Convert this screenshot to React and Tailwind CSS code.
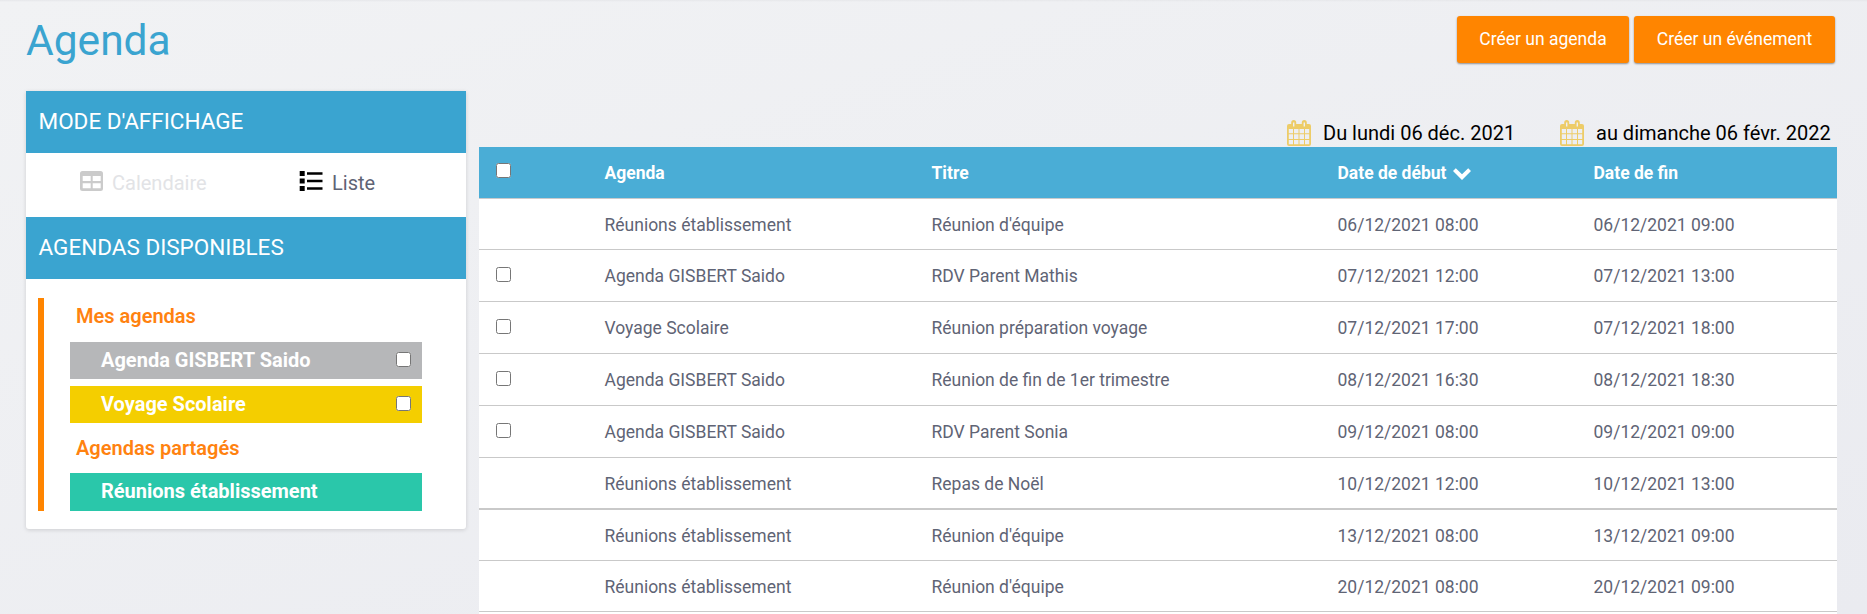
const rows = [
  { agenda: "Réunions établissement", title: "Réunion d'équipe", start: "06/12/2021 08:00", end: "06/12/2021 09:00", size: "h-[51px] border-b" },
  { agenda: "Agenda GISBERT Saido", title: "RDV Parent Mathis", start: "07/12/2021 12:00", end: "07/12/2021 13:00", own: true, size: "h-[52px] border-b" },
  { agenda: "Voyage Scolaire", title: "Réunion préparation voyage", start: "07/12/2021 17:00", end: "07/12/2021 18:00", own: true, size: "h-[52px] border-b" },
  { agenda: "Agenda GISBERT Saido", title: "Réunion de fin de 1er trimestre", start: "08/12/2021 16:30", end: "08/12/2021 18:30", own: true, size: "h-[52px] border-b" },
  { agenda: "Agenda GISBERT Saido", title: "RDV Parent Sonia", start: "09/12/2021 08:00", end: "09/12/2021 09:00", own: true, size: "h-[52px] border-b" },
  { agenda: "Réunions établissement", title: "Repas de Noël", start: "10/12/2021 12:00", end: "10/12/2021 13:00", size: "h-[52px] border-b-2" },
  { agenda: "Réunions établissement", title: "Réunion d'équipe", start: "13/12/2021 08:00", end: "13/12/2021 09:00", size: "h-[51px] border-b" },
  { agenda: "Réunions établissement", title: "Réunion d'équipe", start: "20/12/2021 08:00", end: "20/12/2021 09:00", size: "h-[51px] border-b" },
  { agenda: "", title: "", start: "", end: "", size: "h-[2px]" },
];

const columns = "grid grid-cols-[125.500px_327px_406px_256px_1fr]";

function Checkbox({ className = "" }) {
  return <input type="checkbox" className={"block h-[15px] w-[15px] shrink-0 " + className} />;
}

function TableIcon() {
  return (
    <svg className="h-5 w-[23px]" viewBox="0 0 23 20" fill="#cbcbcb">
      <path fillRule="evenodd" d="M2.500 0h18A2.500 2.500 0 0 1 23 2.500v15a2.500 2.500 0 0 1-2.500 2.500h-18A2.500 2.500 0 0 1 0 17.500v-15A2.500 2.500 0 0 1 2.500 0zM2.700 5v5h8V5zM12.700 5v5h8V5zM2.700 12.300v5h8v-5zM12.700 12.300v5h8v-5z" />
    </svg>
  );
}

function ListIcon() {
  return (
    <svg className="h-5 w-6" viewBox="0 0 24 20" fill="#000">
      <path d="M.7 0h5v5h-5zM.7 7.500h5v5h-5zM.7 15h5v5h-5zM8 1.200h15.500v2.600H8zM8 8.700h15.500v2.600H8zM8 16.200h15.500v2.600H8z" />
    </svg>
  );
}

function CalendarIcon() {
  return (
    <svg className="h-[26px] w-6" viewBox="0 0 24 26" fill="#edcc68">
      <path fillRule="evenodd" d="M2 4h2.200V2.500a2.500 2.500 0 0 1 5 0V4h5.600V2.500a2.500 2.500 0 0 1 5 0V4H22a2 2 0 0 1 2 2v18a2 2 0 0 1-2 2H2a2 2 0 0 1-2-2V6a2 2 0 0 1 2-2zM6 2.400v4.200h1.400V2.400zM16.600 2.400v4.200H18V2.400zM1.800 9v4.300H6V9zM7 9v4.300h4.500V9zM12.500 9v4.300H17V9zM18 9v4.300h4.200V9zM1.800 14.300V19H6v-4.700zM7 14.300V19h4.500v-4.700zM12.500 14.300V19H17v-4.700zM18 14.300V19h4.200v-4.700zM1.800 20v4.200H6V20zM7 20v4.200h4.500V20zM12.500 20v4.200H17V20zM18 20v4.200h4.200V20z" />
    </svg>
  );
}

function Chevron() {
  return (
    <svg className="mt-0.5 ml-[7px] h-3 w-[18px]" viewBox="0 0 18 12" fill="#fff">
      <path d="M2.800 .2L9 6.200L15.200 .2L18 3L9 12L0 3z" />
    </svg>
  );
}

function SectionHeader({ children }) {
  return (
    <h2 className="flex h-[62px] items-center bg-[#3aa4d0] pb-[1px] pl-[12.500px] text-[22.500px] font-normal text-white">
      {children}
    </h2>
  );
}

function Sidebar() {
  return (
    <aside className="w-[440px] shrink-0 self-start rounded-b-[3px] bg-white shadow-[0_1px_4px_rgba(0,0,0,0.14)]">
      <SectionHeader>MODE D'AFFICHAGE</SectionHeader>
      <div className="flex h-16 pt-[18px] text-xl leading-6">
        <div className="flex w-[273px] gap-[9px] pl-[54px] text-[#e2e3e6]">
          <TableIcon />
          Calendaire
        </div>
        <div className="flex gap-[9px] text-[#5f6475]">
          <ListIcon />
          Liste
        </div>
      </div>
      <SectionHeader>AGENDAS DISPONIBLES</SectionHeader>
      <div className="px-3 pt-[19px] pb-[18px]">
        <div className="h-[213px] border-l-[6px] border-[#ff8500] pr-8 pl-[26px] text-xl font-bold text-white">
          <h3 className="h-11 pl-1.5 font-semibold leading-[37px] text-[#ff8210]">Mes agendas</h3>
          <div className="flex h-[37px] justify-between bg-[#b6b7b9] pr-[11px] pl-[31px] leading-9">
            Agenda GISBERT Saido
            <Checkbox className="mt-2.5" />
          </div>
          <div className="mt-[7px] flex h-[37px] justify-between bg-[#f4ce00] pr-[11px] pl-[31px] leading-9">
            Voyage Scolaire
            <Checkbox className="mt-2.5" />
          </div>
          <h3 className="h-[50px] pl-1.5 font-semibold leading-[51px] text-[#ff8210]">Agendas partagés</h3>
          <div className="h-[38px] bg-[#2ac7aa] pl-[31px] leading-9">Réunions établissement</div>
        </div>
      </div>
    </aside>
  );
}

function Button({ children, className }) {
  return (
    <button
      className={
        "h-[47px] rounded-[3px] bg-[#ff8500] text-[17.500px] text-white shadow-[0_1px_2px_rgba(0,0,0,0.4)] " +
        className
      }
    >
      {children}
    </button>
  );
}

export default function App() {
  return (
    <div className="h-[614px] overflow-hidden bg-linear-to-br from-[#f1f2f4] to-[#eaebf0] font-[Roboto,sans-serif]">
      <div className="h-0.5 bg-linear-to-b from-[#e6e7ea] to-transparent" />
      <header className="flex h-[89px] justify-between pr-8 pl-[26px]">
        <h1 className="text-[42.500px] leading-[78px] text-[#3aa4d0]">Agenda</h1>
        <div className="flex gap-[5px] pt-[14px]">
          <Button className="w-[172px]">Créer un agenda</Button>
          <Button className="w-[201px]">Créer un événement</Button>
        </div>
      </header>
      <div className="flex gap-[13px] pl-[26px]">
        <Sidebar />
        <main className="w-[1358px]">
          <div className="flex h-14 pt-[29px] pl-[808px] text-xl leading-[26px] text-black">
            <div className="flex w-[273px] gap-3">
              <CalendarIcon />
              Du lundi 06 déc. 2021
            </div>
            <div className="flex gap-3 whitespace-nowrap">
              <CalendarIcon />
              au dimanche 06 févr. 2022
            </div>
          </div>
          <div className={columns + " h-[52px] border-b border-[#c9cacc] bg-[#4aadd6] text-[17.500px] font-bold leading-[52px] text-white"}>
            <Checkbox className="mt-4 ml-[17px]" />
            <span>Agenda</span>
            <span>Titre</span>
            <span className="flex items-center leading-[50px]">
              Date de début
              <Chevron />
            </span>
            <span>Date de fin</span>
          </div>
          {rows.map((row, i) => (
            <div
              key={i}
              className={columns + " overflow-hidden border-[#c9c9c9] bg-white text-[17.500px] leading-[52px] text-[#5f6475] " + row.size}
            >
              <div>{row.own && <Checkbox className="mt-[17px] ml-[17px]" />}</div>
              <span>{row.agenda}</span>
              <span>{row.title}</span>
              <span>{row.start}</span>
              <span>{row.end}</span>
            </div>
          ))}
        </main>
      </div>
    </div>
  );
}
